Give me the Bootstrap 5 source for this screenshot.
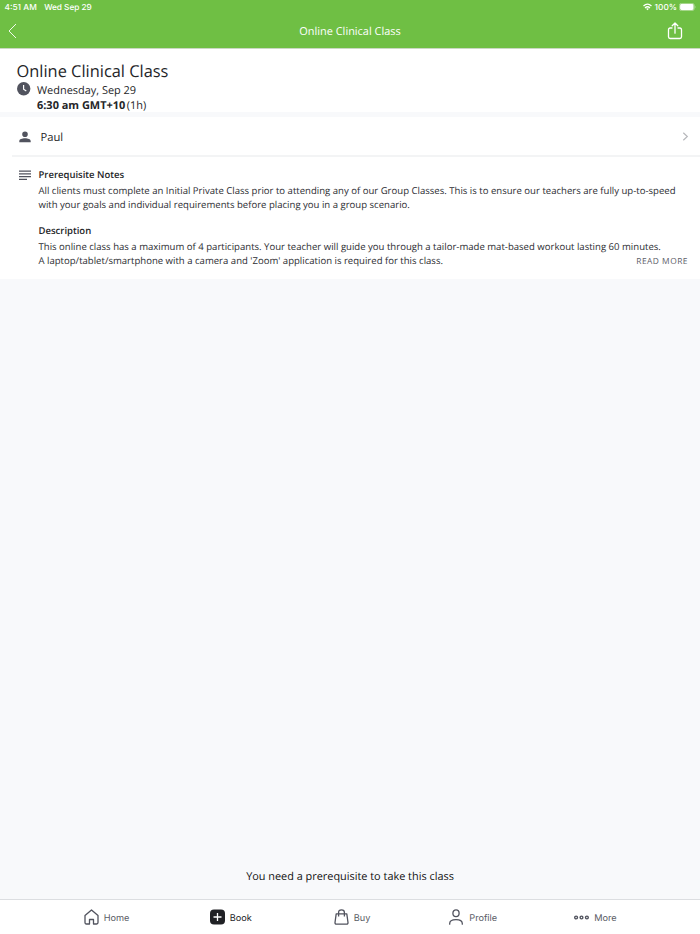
<!DOCTYPE html>
<html lang="en">
<head>
<meta charset="utf-8">
<meta name="viewport" content="width=device-width, initial-scale=1">
<title>Online Clinical Class</title>
<link href="https://cdn.jsdelivr.net/npm/bootstrap@5.3.0/dist/css/bootstrap.min.css" rel="stylesheet">
<style>
  body { font-family: "Open Sans", "Noto Sans", sans-serif; background: #f8f9fb; color: #242528; line-height: 1; text-rendering: geometricPrecision; }
  svg { display: block; flex: none; fill: none; }
  .app-head { background: #6fbf44; height: 49px; border-bottom: 1px solid #cbd8c4; }
  .status-bar { font: 500 8.3px/14px Inter, sans-serif; height: 14px; padding: 0 4px 0 4.5px; }
  .status-bar span { padding-top: 1px; }
  .status-bar .date { margin-left: 7.5px; letter-spacing: -.06px; }
  .status-bar .battery-text { margin: 0 2px 0 3px; }
  .title-bar { height: 34px; padding: 0 17px 0 8px; }
  .title-bar .heading { font-size: 10.95px; line-height: 33px; margin-left: 9px; padding-top: 1px; }
  .side { width: 16px; }
  .summary { height: 63px; padding: 13px 17px 0 16.5px; }
  .summary h1 { font-size: 16.4px; line-height: 18px; height: 20px; font-weight: 400; }
  .when { font-size: 10.95px; line-height: 15.3px; margin-left: 6.5px; padding-top: 1px; }
  .duration { margin-left: 1.5px; }
  .teacher { margin-top: 5px; height: 38px; padding: 2px 11px 0 19px; font-size: 11.2px; }
  .teacher .name { margin-left: 9.5px; padding-top: 2px; }
  .teacher svg { margin-bottom: 1px; }
  .rule { height: 2px; margin-left: 12px; background: #f3f4f5; }
  .details { height: 122px; padding: 11px 12px 0 19px; font-size: 9.57px; line-height: 14px; color: #2d2e33; }
  .details h2 { font-size: 9.5px; line-height: 14px; font-weight: 600; margin-bottom: 2px; color: #242528; }
  .details .second { margin-top: 12px; }
  .details svg { margin-top: 2px; }
  .notes-text { margin-left: 7.5px; }
  .more-link { font-size: 8.4px; letter-spacing: .5px; color: #5e606a; text-decoration: none; padding-top: 1px; }
  .notice { font-size: 10.9px; line-height: 16px; padding-bottom: 14px; color: #111; }
  .tabs { height: 35px; border-top: 1px solid #dcdee1; padding: 0 44px 0 45px; font: 400 9.2px/14px Inter, sans-serif; }
  .tabs a { color: #5a5c65; text-decoration: none; gap: 5px; }
  .tabs a span { padding-top: 3px; }
  .tabs a:first-child { padding-left: 1px; }
  .tabs a:last-child { padding-left: 1px; }
  .tabs a.active { color: #242528; padding-left: 3px; }
</style>
</head>
<body>
<div class="d-flex flex-column vh-100 overflow-hidden">
  <header class="app-head text-white">
    <div class="status-bar d-flex align-items-center">
      <span>4:51 AM</span><span class="date">Wed Sep 29</span>
      <svg class="ms-auto" width="9" height="8" viewBox="0 0 9 8" stroke="#fff" stroke-width="1.3"><path d="M.5 3Q4.5-.8 8.5 3M2 4.9Q4.5 2.6 7 4.9"/><path d="M3.1 5.8Q4.5 4.7 5.9 5.8L4.5 7.3Z" fill="#fff" stroke="none"/></svg>
      <span class="battery-text">100%</span>
      <svg width="17" height="8" viewBox="0 0 17 8"><rect x=".4" y=".4" width="14.8" height="7.2" rx="2" stroke="#c5e4b4" stroke-width=".7"/><rect x="1.1" y="1.1" width="13.4" height="5.8" rx="1.3" fill="#fff"/><path d="M16 2.8q1 1.2 0 2.4Z" fill="#c5e4b4"/></svg>
    </div>
    <div class="title-bar d-flex align-items-center justify-content-between">
      <div class="side"><svg width="9" height="16" viewBox="0 0 9 16" stroke="#fff" stroke-width=".9"><path d="M8 1 1 8l7 7"/></svg></div>
      <span class="heading">Online Clinical Class</span>
      <svg width="16" height="18" viewBox="0 0 16 18" stroke="#fff" stroke-width="1.3" stroke-linecap="round" stroke-linejoin="round"><path d="M5 6H3.2Q1.5 6 1.5 7.7v7.1q0 1.7 1.7 1.7h9.6q1.7 0 1.7-1.7V7.7Q14.5 6 12.8 6H11M8 11.2V1.2M5.2 3.8 8 1l2.8 2.8"/></svg>
    </div>
  </header>

  <section class="summary bg-white">
    <h1 class="mb-0">Online Clinical Class</h1>
    <div class="d-flex">
      <svg width="14" height="14" viewBox="0 0 14 14"><circle cx="6.7" cy="6.7" r="6.7" fill="#51535e"/><path d="M6.6 3.1v4.1l2.7 1.7" stroke="#fff" stroke-width="1.2"/></svg>
      <div class="when">
        <div>Wednesday, Sep 29</div>
        <div><strong>6:30 am GMT+10</strong><span class="duration">(1h)</span></div>
      </div>
    </div>
  </section>

  <section class="teacher bg-white d-flex align-items-center">
    <svg width="12" height="12" viewBox="0 0 12 12"><path d="M6 .5a2.8 2.8 0 1 1 0 5.6A2.8 2.8 0 0 1 6 .5ZM.3 11.3V10C.3 8.2 3.2 7.2 6 7.2s5.7 1 5.7 2.8v1.3Z" fill="#51535e"/></svg>
    <span class="name flex-fill">Paul</span>
    <svg width="7" height="9" viewBox="0 0 7 9" stroke="#b7b8bc" stroke-width="1.2"><path d="M1.3.8 5.3 4.5l-4 3.7"/></svg>
  </section>
  <div class="bg-white"><div class="rule"></div></div>

  <section class="details bg-white d-flex">
    <svg width="12" height="11" viewBox="0 0 12 11" stroke="#51535e" stroke-width="1.3"><path d="M0 1.2h12M0 3.9h12M0 6.600h12M0 9.300h8"/></svg>
    <div class="flex-fill notes-text">
      <h2>Prerequisite Notes</h2>
      <p class="mb-0 text-nowrap">All clients must complete an Initial Private Class prior to attending any of our Group Classes. This is to ensure our teachers are fully up-to-speed<br>with your goals and individual requirements before placing you in a group scenario.</p>
      <h2 class="second">Description</h2>
      <p class="mb-0 text-nowrap">This online class has a maximum of 4 participants. Your teacher will guide you through a tailor-made mat-based workout lasting 60 minutes.</p>
      <div class="d-flex justify-content-between"><span>A laptop/tablet/smartphone with a camera and 'Zoom' application is required for this class.</span><a class="more-link" href="#">READ MORE</a></div>
    </div>
  </section>

  <div class="notice text-center mt-auto">You need a prerequisite to take this class</div>
  <nav class="tabs bg-white d-flex">
    <a href="#" class="d-flex align-items-center justify-content-center col">
      <svg width="15" height="16" viewBox="0 0 15 16" stroke="#51535e" stroke-width="1.3" stroke-linejoin="round"><path d="M1 6.6 7.5.9 14 6.6v7q0 1.4-1.4 1.4H9.5v-4.5h-4V15H2.4Q1 15 1 13.6Z"/></svg><span>Home</span></a>
    <a href="#" class="active d-flex align-items-center justify-content-center col">
      <svg width="15" height="16" viewBox="0 0 15 16"><rect y=".5" width="15" height="15" rx="4" fill="#202125"/><path d="M7.5 4v8M3.5 8h8" stroke="#fff" stroke-width="1.3"/></svg><span>Book</span></a>
    <a href="#" class="d-flex align-items-center justify-content-center col">
      <svg width="15" height="16" viewBox="0 0 15 16" stroke="#51535e" stroke-width="1.3" stroke-linejoin="round"><path d="M2.2 4.8h10.6l1.2 8.7q.1 1.700-1.500 1.700h-10Q.9 15.200 1 13.500ZM4.600 7.500V3.400q0-2.600 2.900-2.600t2.900 2.600v4.100"/></svg><span>Buy</span></a>
    <a href="#" class="d-flex align-items-center justify-content-center col">
      <svg width="15" height="16" viewBox="0 0 15 16" stroke="#51535e" stroke-width="1.3" stroke-linecap="round"><ellipse cx="7" cy="4.200" rx="3.100" ry="3.400"/><path d="M.7 15.200v-.7q0-3.900 6.300-3.900t6.300 3.900v.7"/></svg><span>Profile</span></a>
    <a href="#" class="d-flex align-items-center justify-content-center col">
      <svg width="15" height="5" viewBox="0 0 15 5" stroke="#51535e" stroke-width="1.4"><circle cx="2.100" cy="2.500" r="1.400"/><circle cx="7.500" cy="2.500" r="1.400"/><circle cx="12.900" cy="2.500" r="1.400"/></svg><span>More</span></a>
  </nav>
</div>
<script src="https://cdn.jsdelivr.net/npm/bootstrap@5.3.0/dist/js/bootstrap.bundle.min.js"></script>
</body>
</html>
